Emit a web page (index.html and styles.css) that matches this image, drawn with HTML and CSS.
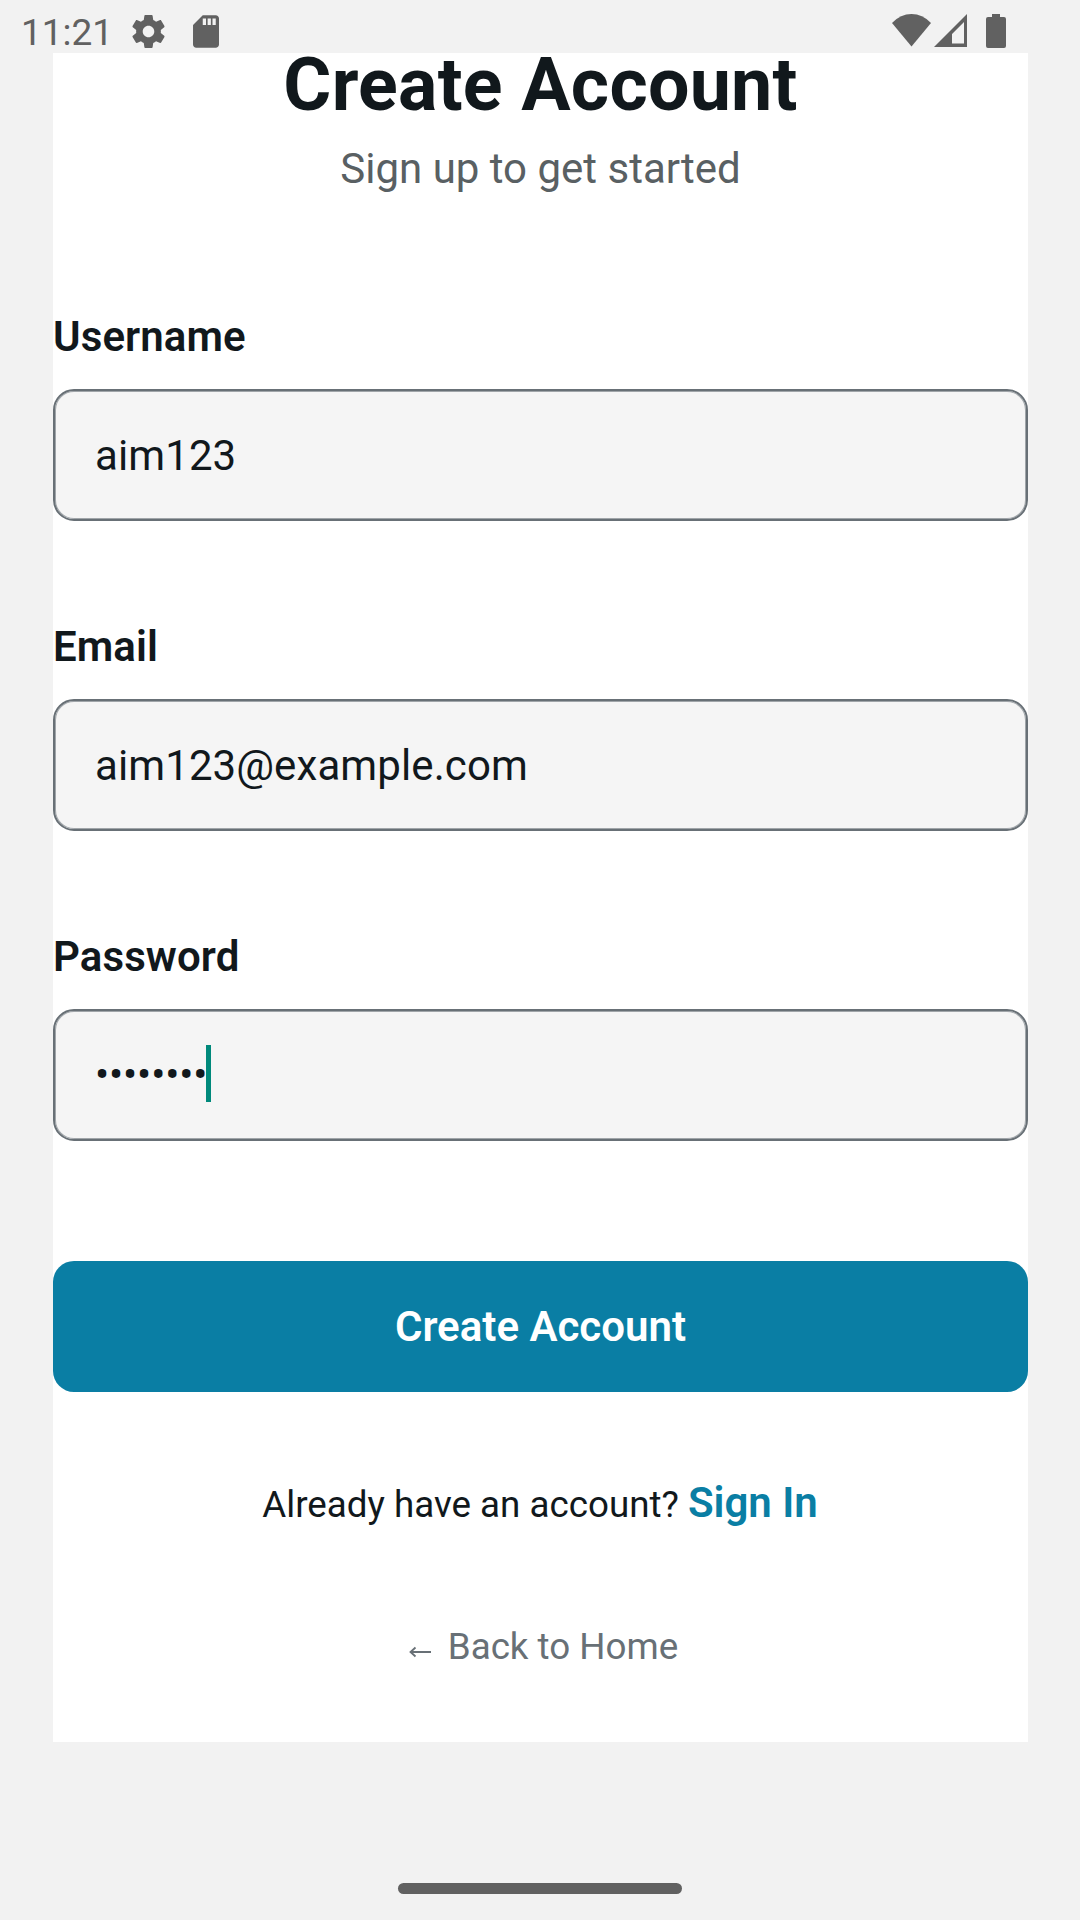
FILE: index.html
```html
<!DOCTYPE html>
<html lang="en">
<head>
<meta charset="utf-8">
<title>Create Account</title>
<link rel="stylesheet" href="styles.css">
</head>
<body>
<div class="screen">
  <header class="status-bar">
    <div class="status-left">
      <span class="clock">11:21</span>
      <svg class="icon-gear" viewBox="2 2 20 20"><path d="M19.43 12.98c.04-.32.07-.64.07-.98s-.03-.66-.07-.98l2.11-1.65c.19-.15.24-.42.12-.64l-2-3.46c-.12-.22-.39-.3-.61-.22l-2.49 1c-.52-.4-1.08-.73-1.69-.98l-.38-2.65C14.46 2.18 14.25 2 14 2h-4c-.25 0-.46.18-.49.42l-.38 2.65c-.61.25-1.17.59-1.69.98l-2.49-1c-.23-.09-.49 0-.61.22l-2 3.46c-.13.22-.07.49.12.64l2.11 1.65c-.04.32-.07.65-.07.98s.03.66.07.98l-2.11 1.65c-.19.15-.24.42-.12.64l2 3.46c.12.22.39.3.61.22l2.49-1c.52.4 1.08.73 1.69.98l.38 2.65c.03.24.24.42.49.42h4c.25 0 .46-.18.49-.42l.38-2.65c.61-.25 1.17-.59 1.69-.98l2.49 1c.23.09.49 0 .61-.22l2-3.46c.12-.22.07-.49-.12-.64l-2.11-1.65zM12 15.5c-1.93 0-3.5-1.57-3.5-3.5s1.57-3.500 3.500-3.500 3.500 1.570 3.500 3.500-1.570 3.500-3.500 3.500z"/></svg>
      <svg class="icon-sd" viewBox="4 2 16 20"><path d="M18 2h-8L4.020 8 4 20c0 1.100.9 2 2 2h12c1.100 0 2-.9 2-2V4c0-1.100-.9-2-2-2zm-6 6h-2V4h2v4zm3 0h-2V4h2v4zm3 0h-2V4h2v4z"/></svg>
    </div>
    <div class="status-right">
      <svg class="icon-wifi" viewBox="0 0 39 33"><path d="M0 9Q8.500 0 19.500 0T39 9L19.500 32.500z"/></svg>
      <svg class="icon-signal" viewBox="0 0 33 33"><path fill-rule="evenodd" d="M33 0V33H0zM30 8L18 20V29.500H30z"/></svg>
      <svg class="icon-battery" viewBox="0 0 20 34"><path d="M6 0h8v3h4a2 2 0 0 1 2 2v27a2 2 0 0 1-2 2H2a2 2 0 0 1-2-2V5a2 2 0 0 1 2-2h4z"/></svg>
    </div>
  </header>

  <main class="card">
    <h1 class="title">Create Account</h1>
    <p class="subtitle">Sign up to get started</p>
    <form class="form">
      <div class="field">
        <span class="label">Username</span>
        <div class="input">aim123</div>
      </div>
      <div class="field">
        <span class="label">Email</span>
        <div class="input">aim123@example.com</div>
      </div>
      <div class="field">
        <span class="label">Password</span>
        <div class="input input-password"><span class="dots">••••••••</span><span class="caret"></span></div>
      </div>
      <button class="submit" type="button">Create Account</button>
    </form>
    <div class="signin">
      <span class="signin-text">Already have an account?</span>
      <a class="signin-link">Sign In</a>
    </div>
    <a class="back"><svg class="arrow" viewBox="0 0 22 12"><path d="M22 6H2M6.500 1.500L1.500 6l5 4.500"/></svg><span>Back to Home</span></a>
  </main>

  <footer class="nav"><div class="nav-handle"></div></footer>
</div>
</body>
</html>
```

FILE: styles.css
```css
* { box-sizing: border-box; }

body {
  margin: 0;
  background: #f2f2f2;
  color: #11181c;
  font-family: Roboto, "Liberation Sans", sans-serif;
  font-size: 42px;
  line-height: 56px;
}

.screen {
  display: flex;
  flex-direction: column;
  width: 1080px;
  height: 1920px;
  overflow: hidden;
}

.status-bar {
  display: flex;
  justify-content: space-between;
  height: 53px;
  padding: 14px 74px 0 21px;
  flex: none;
}

.status-bar svg { fill: #616161; display: block; flex: none; }
.status-left, .status-right { display: flex; align-items: flex-start; }
.clock {
  width: 110.5px;
  color: #616161;
  font-size: 37px;
  line-height: 38px;
  white-space: nowrap;
}
.icon-gear { width: 33px; height: 33px; margin-top: 1px; }
.icon-sd { width: 26px; height: 33px; margin: 1px 0 0 28.5px; }
.icon-wifi { width: 39px; height: 33px; }
.icon-signal { width: 33px; height: 33px; margin-left: 3px; }
.icon-battery { width: 20px; height: 34px; margin-left: 19px; }

.card {
  display: flex;
  flex-direction: column;
  flex: none;
  height: 1689px;
  margin: 0 52px 0 53px;
  background: #fff;
}

.title {
  margin: 0;
  font-size: 73.5px;
  font-weight: 700;
  letter-spacing: 0.25px;
  line-height: 64px;
  text-align: center;
}

.subtitle {
  margin: 24px 0 0;
  color: #596063;
  text-align: center;
}

.form {
  display: flex;
  flex-direction: column;
  gap: 98px;
  margin-top: 112px;
}

.field { display: flex; flex-direction: column; gap: 24px; }
.label { font-weight: 600; letter-spacing: 0.1px; }

.input {
  display: flex;
  align-items: center;
  height: 132px;
  padding: 2px 40px 0;
  border: 2px solid #687076;
  border-radius: 21px;
  background: #f5f5f5;
  box-shadow: inset 0 0 0 1px rgba(104, 112, 118, 0.6);
  letter-spacing: 0.1px;
}

.input-password { padding-top: 0; }
.dots { letter-spacing: -0.13px; }
.caret { width: 5px; height: 57px; margin: 0 0 3px -1px; background: #00897b; }

.submit {
  height: 131px;
  margin-top: 22px;
  padding: 0;
  border: 0;
  border-radius: 21px;
  background: #0a7ea4;
  color: #fff;
  font: 600 42px/56px Roboto, "Liberation Sans", sans-serif;
}

.signin {
  display: flex;
  justify-content: center;
  align-items: baseline;
  gap: 9px;
  margin: 83px 1px 0 0;
}
.signin-text { font-size: 36.75px; }
.signin-link { color: #0a7ea4; font-weight: 600; }

.back {
  display: flex;
  justify-content: center;
  align-items: center;
  gap: 16.5px;
  margin-top: 86px;
  padding-left: 6.5px;
  color: #687076;
  font-size: 36.75px;
}
.arrow {
  width: 22px;
  height: 12px;
  margin-top: 10px;
  fill: none;
  stroke: #687076;
  stroke-width: 1.8;
}

.nav { display: flex; justify-content: center; padding-top: 141px; }
.nav-handle { width: 284px; height: 11px; border-radius: 6px; background: #616161; }
```
